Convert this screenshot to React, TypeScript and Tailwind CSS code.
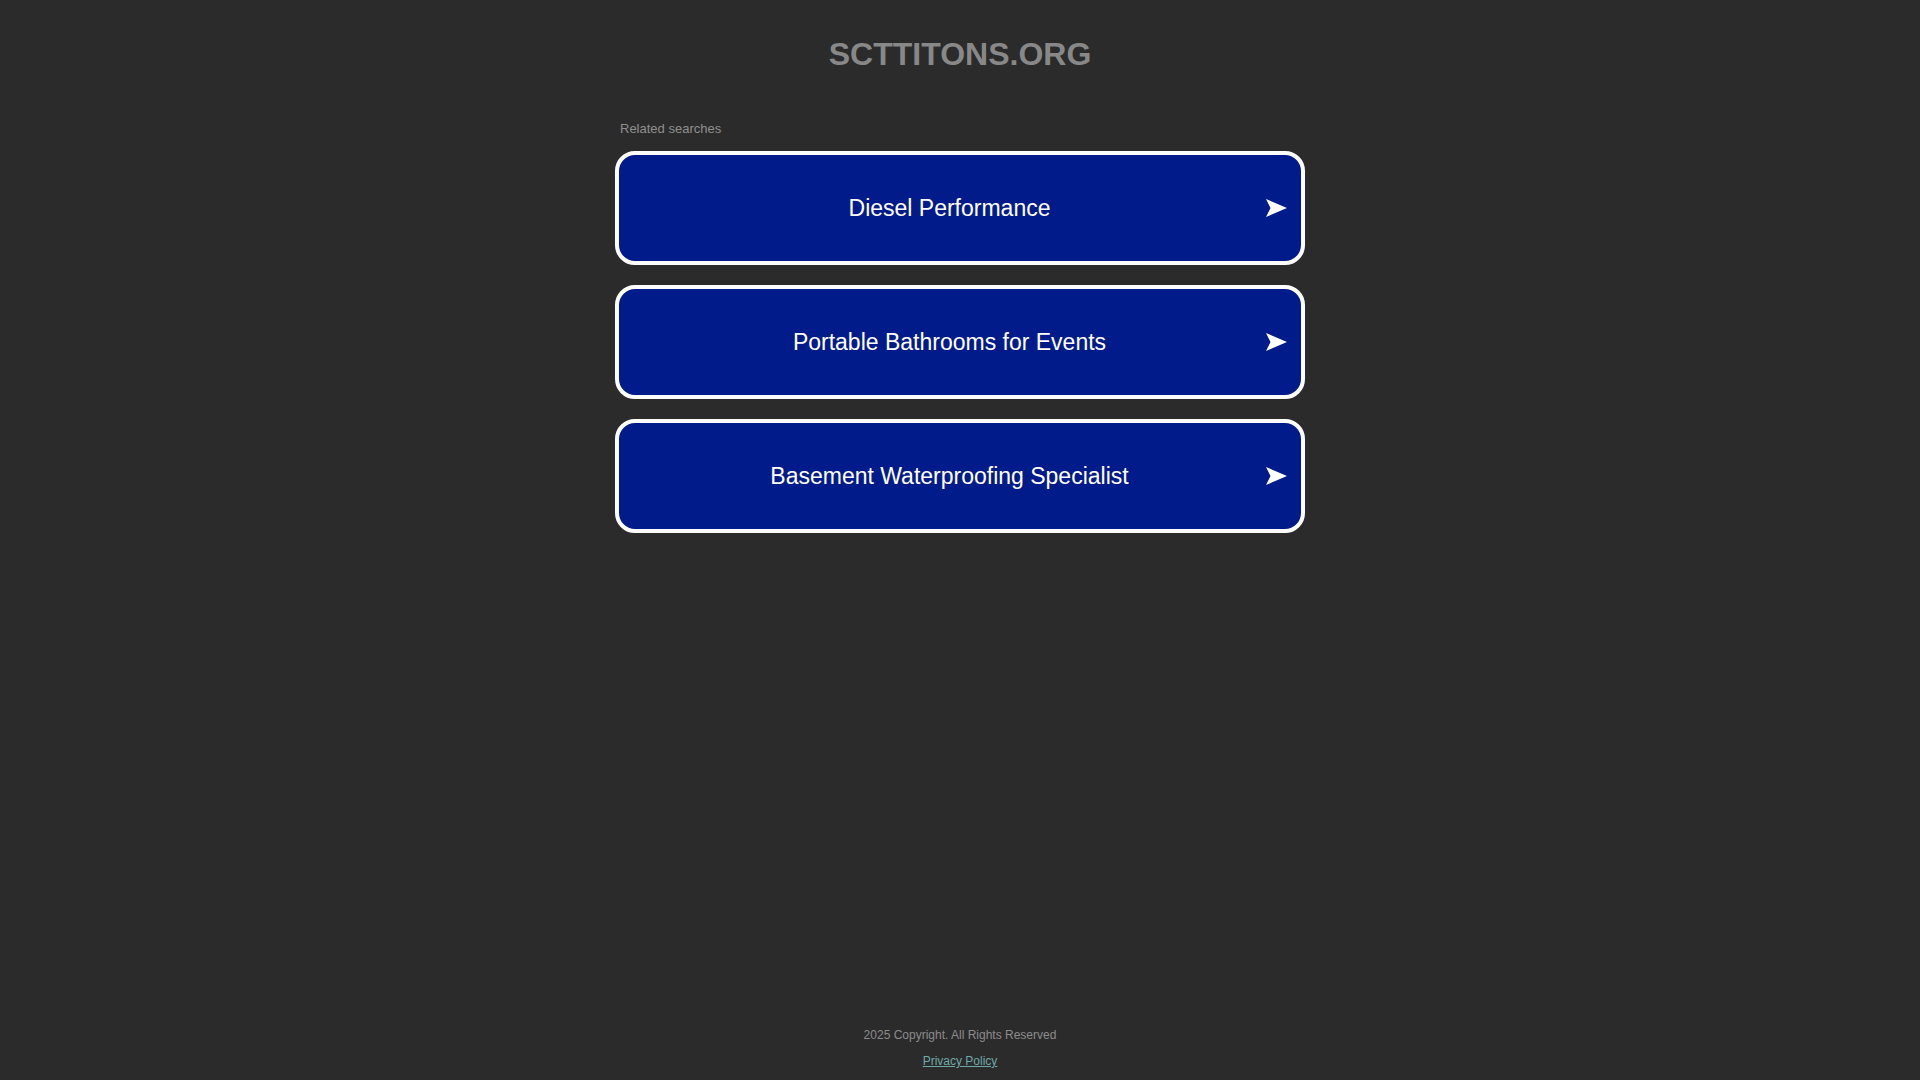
import React from 'react'

const searches = ['Diesel Performance', 'Portable Bathrooms for Events', 'Basement Waterproofing Specialist']

function Arrow() {
  return (
    <svg width="21" height="18" viewBox="0 0 21 18" className="shrink-0">
      <path d="M0 0 L21 9 L0 18 L4.5 9 Z" fill="#ffffff" />
    </svg>
  )
}

export default function App() {
  return (
    <div className="flex min-h-screen flex-col bg-[#2b2b2b] font-['Liberation_Sans',Arial,sans-serif]">
      <h1 className="pt-[36px] text-center text-[32px] font-bold leading-[37px] text-[#888888]">
        SCTTITONS.ORG
      </h1>

      <div className="mx-auto mt-[48px] w-[690px]">
        <p className="pl-[5px] text-[13px] leading-[15px] text-[#8f8f8f]">Related searches</p>
        <div className="mt-[15px] flex flex-col gap-[20px]">
          {searches.map(s => (
            <a key={s} href="#"
              className="flex h-[114px] items-center rounded-[20px] border-4 border-white bg-[#021b8a] px-[14px] text-white">
              <span className="flex-1 text-center text-[23px]">{s}</span>
              <Arrow />
            </a>
          ))}
        </div>
      </div>

      <footer className="mt-auto flex flex-col items-center pb-[12px] text-[12px] leading-[14px]">
        <p className="text-[#8c8c8c]">2025 Copyright. All Rights Reserved</p>
        <a href="#" className="mt-[12px] text-[#70a8a8] underline">Privacy Policy</a>
      </footer>
    </div>
  )
}
